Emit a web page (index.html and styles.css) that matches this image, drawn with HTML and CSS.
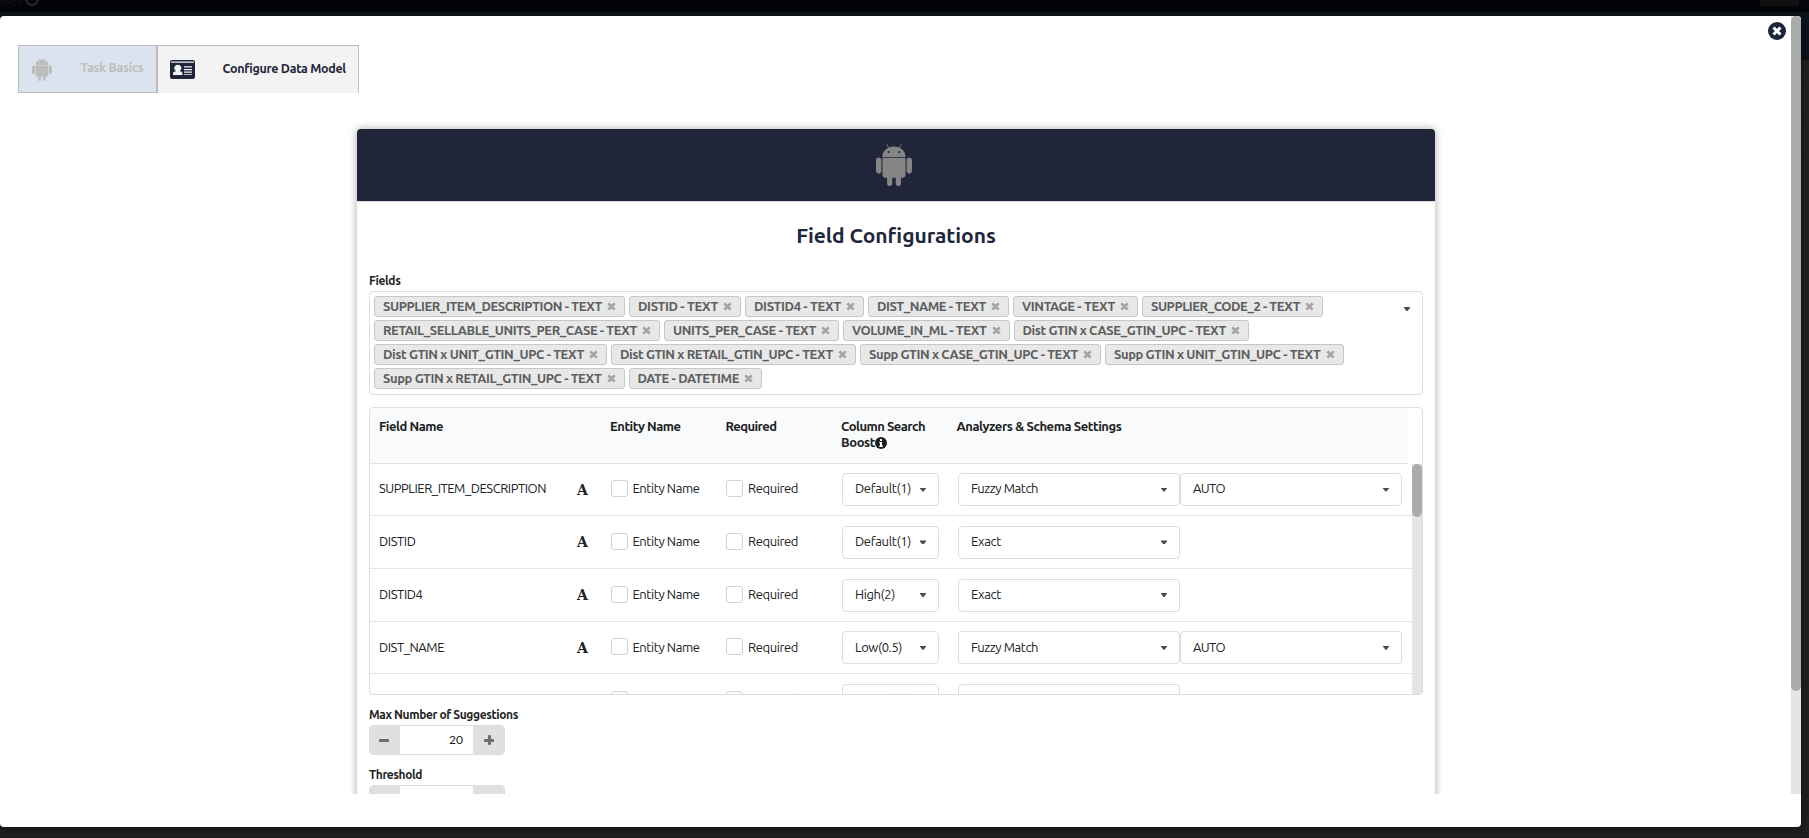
FILE: index.html
```html
<!DOCTYPE html>
<html lang="en">
<head>
<meta charset="utf-8">
<title>Configure Data Model</title>
<link rel="stylesheet" href="styles.css">
</head>
<body>
<svg class="defs" aria-hidden="true">
  <symbol id="android" viewBox="32 32 384 448"><path d="M89.6 204.5v115.8c0 15.4-12.1 27.7-27.5 27.7-15.3 0-30.1-12.4-30.1-27.7V204.5c0-15.1 14.8-27.5 30.1-27.5 15.1 0 27.5 12.4 27.5 27.5zm10.8 157c0 16.4 13.2 29.6 29.6 29.6h19.9l.3 61.1c0 36.9 55.2 36.6 55.2 0v-61.1h37.2v61.1c0 36.7 55.5 36.8 55.5 0v-61.1h20.2c16.2 0 29.4-13.2 29.4-29.6V182.1H100.4v179.4zm248-189.1H99.3c0-42.8 25.6-80 63.6-99.4l-19.1-35.3c-2.8-4.9 4.3-8 6.7-3.8l19.4 35.6c34.9-15.5 75-14.7 108.3 0L297.5 34c2.5-4.3 9.5-1.1 6.7 3.8L285.1 73c37.7 19.4 63.3 56.6 63.3 99.4zm-170.7-55.5c0-5.7-4.6-10.5-10.5-10.5-5.7 0-10.2 4.8-10.2 10.5s4.6 10.5 10.2 10.5c5.9 0 10.5-4.8 10.5-10.5zm113.4 0c0-5.7-4.6-10.5-10.2-10.5-5.9 0-10.5 4.8-10.5 10.5s4.6 10.5 10.5 10.5c5.6 0 10.2-4.8 10.2-10.5zm94.8 60.1c-15.1 0-27.5 12.1-27.5 27.5v115.8c0 15.4 12.4 27.7 27.5 27.7 15.4 0 30.1-12.4 30.1-27.7V204.5c0-15.4-14.8-27.5-30.1-27.5z"/></symbol>
  <symbol id="times" viewBox="0 0 10 10"><path d="M1.500 1.500l7 7M8.500 1.500l-7 7" stroke="currentColor" stroke-width="3" fill="none"/></symbol>
</svg>

<div class="backdrop">
  <div class="brandbar"><span class="brand">GHTS</span><span class="ring"></span><span class="user"></span></div>
  <div class="navbar"></div>
  <div class="page"></div>
</div>

<div class="modal">
  <div class="scroller">
    <div class="view">
      <div class="tabs">
        <div class="tab tab-disabled"><svg class="tab-android"><use href="#android"/></svg><span data-fit="63">Task Basics</span></div>
        <div class="tab tab-active">
          <svg class="tab-card" viewBox="0 0 25 19"><path fill="#1e253a" fill-rule="evenodd" d="M2 0h21a2 2 0 0 1 2 2v15a2 2 0 0 1-2 2H2a2 2 0 0 1-2-2V2a2 2 0 0 1 2-2zM1 1.6v1.2h23V1.6zM14 6.3v1.2h8V6.3zM14 9v1.2h8V9zM14 11.6v1.2h8v-1.2zM14 14.2v.8h8v-.8zM3 15h9.5v-1.2q0-2.3-3-2.6a3.6 3.4 0 1 0-3.4 0q-3.100 .3-3.100 2.600z"/></svg>
          <span data-fit="123">Configure Data Model</span>
        </div>
      </div>

      <div class="card">
        <div class="card-head"><svg class="head-android"><use href="#android"/></svg></div>
        <div class="card-body">
          <h2 class="title"><span data-fit="199">Field Configurations</span></h2>
          <div class="label label-fields"><span data-fit="31.500">Fields</span></div>
          <div class="multi">
            <div class="chips" id="chips"></div>
            <i class="caret"></i>
          </div>
          <div class="table">
            <div class="thead">
              <span><b data-fit="64">Field Name</b></span>
              <span><b data-fit="70.500">Entity Name</b></span>
              <span><b data-fit="51">Required</b></span>
              <span><b data-fit="84">Column Search</b><br><b data-fit="34">Boost</b><svg class="info" viewBox="0 0 12 12"><circle cx="6" cy="6" r="6" fill="#1c1d1e"/><path d="M5 2h2v2H5zM4.200 5H7v3.600h.8V10H4.200V8.600H5V6.200h-.8z" fill="#fff"/></svg></span>
              <span><b data-fit="165">Analyzers &amp; Schema Settings</b></span>
            </div>
            <div class="tscroll">
              <div class="rows" id="rows"></div>
              <div class="track"><div class="thumb"></div></div>
            </div>
          </div>
          <div class="label label-num"><span data-fit="149">Max Number of Suggestions</span></div>
          <div class="stepper"><span class="step"><i class="bar"></i></span><span class="num">20</span><span class="step step-plus"><i class="bar"></i><i class="bar bar-v"></i></span></div>
          <div class="label label-num"><span data-fit="53">Threshold</span></div>
          <div class="stepper"><span class="step"></span><span class="num"></span><span class="step step-plus"></span></div>
        </div>
      </div>
    </div>
    <div class="main-track"><div class="main-thumb"></div></div>
  </div>
  <svg class="close" viewBox="0 0 18 18"><circle cx="9" cy="9" r="9" fill="#1e253a"/><path d="M5.500 5.500l7 7M12.500 5.500l-7 7" stroke="#fff" stroke-width="3"/></svg>
</div>
<script src="app.js"></script>
</body>
</html>
```

FILE: styles.css
```css
* { box-sizing: border-box; }
body {
  margin: 0;
  height: 838px;
  overflow: hidden;
  font-family: Ubuntu, "Noto Sans", sans-serif;
  font-size: 13px;
  color: #212223;
}
.defs { display: none; }
[data-fit] { display: inline-block; white-space: nowrap; }

.backdrop { height: 838px; display: flex; flex-direction: column; background: #212121; }
.brandbar { height: 12px; background: #030508; display: flex; align-items: flex-start; overflow: hidden; }
.brand { width: 25px; font-size: 8px; line-height: 6px; letter-spacing: .8px; color: #1c1c1c; }
.ring { width: 14px; height: 14px; margin-top: -8px; border: 2px solid #2a2b2b; border-radius: 50%; }
.user { width: 39px; height: 6px; margin: 0 10px 0 auto; background: #111; }
.navbar { height: 48px; background: linear-gradient(#0c131a, #0b1018); }
.page {
  flex: 1;
  background:
    linear-gradient(#1b1b1b, #1b1b1b) 0 9px / 100% 1px no-repeat,
    linear-gradient(#1b1b1b, #1b1b1b) 0 22px / 100% 1px no-repeat,
    linear-gradient(#1b1b1b, #1b1b1b) 0 53px / 100% 1px no-repeat,
    linear-gradient(#1b1b1b, #1b1b1b) 0 66px / 100% 1px no-repeat,
    linear-gradient(#1b1b1b, #1b1b1b) 0 97px / 100% 1px no-repeat,
    linear-gradient(#1a1a1a, #1a1a1a) 0 777px / 100% 1px no-repeat,
    #212121;
}

.modal {
  position: absolute;
  left: 0;
  top: 16px;
  width: 1801px;
  height: 811px;
  background: #fff;
  border-radius: 4px;
  overflow: hidden;
  box-shadow: 1px 3px 3px rgba(0, 0, 0, .2), 1px 3px 15px 2px rgba(0, 0, 0, .2);
}
.scroller { height: 778px; display: flex; overflow: hidden; }
.view { flex: 1; padding: 29px 0 0 18px; }
.main-track { width: 10px; background: #e5e5e5; }
.main-thumb { height: 675px; background: #ababab; border-radius: 5px; }
.close { position: absolute; left: 1768px; top: 6px; width: 18px; height: 18px; }

.tabs { display: flex; height: 48px; font-weight: 700; font-size: 12.500px; }
.tab { display: flex; align-items: center; border: 1px solid #bcbcbc; }
.tab-disabled { width: 139px; background: #dbe4ee; color: #bdbdbd; padding-left: 13px; }
.tab-disabled span { margin-left: 28.500px; padding-bottom: 4px; }
.tab-android { width: 20px; height: 23px; fill: #bdbdbd; }
.tab-active { width: 202px; background: #f3f3f3; color: #1e253a; border-bottom: 0; padding-left: 12px; }
.tab-active span { margin-left: 27.500px; padding-bottom: 3px; }
.tab-card { width: 25px; height: 19px; }

.card {
  width: 1078px;
  height: 1000px;
  margin: 36px 0 0 339px;
  border-radius: 4px;
  box-shadow: 0 0 8px rgba(0, 0, 0, .35);
}
.card-head {
  height: 73px;
  background: #202539;
  border-bottom: 1px solid #dfe0e4;
  border-radius: 4px 4px 0 0;
  display: flex;
  justify-content: center;
  padding: 15px 4px 0 0;
}
.head-android { width: 36px; height: 42px; fill: #858585; }
.card-body { padding: 0 12px; }
.title { margin: 0; padding-top: 18px; height: 70px; font-size: 21px; line-height: 30px; text-align: center; color: #20273c; }
.label { font-size: 12px; font-weight: 700; line-height: 17px; }
.label-fields { height: 19px; }
.multi { width: 1054px; height: 104px; border: 1px solid #dcdddd; border-radius: 4px; display: flex; padding: 4px; }
.chips { width: 1010px; display: flex; flex-direction: column; gap: 3px; }
.chip-row { display: flex; gap: 4px; }
.chip {
  height: 21px;
  display: flex;
  align-items: center;
  border: 1px solid #c6c7c8;
  border-radius: 3px;
  background: #e8e8e8;
  color: #5d5e5e;
  font-weight: 700;
  font-size: 13px;
  line-height: 17px;
  padding: 0 0 1px 8px;
}
.chip svg { width: 9px; height: 9px; margin: 1px 0 0 5px; color: #a3a3a3; }
.caret { width: 6px; height: 4px; background: #4a4b4b; clip-path: polygon(0 0, 100% 0, 100% 20%, 60% 100%, 40% 100%, 0 20%); }
.multi .caret { margin: 11px 0 0 20px; }

.table { width: 1054px; height: 288px; margin-top: 12px; border: 1px solid #dcdddd; border-radius: 4px; overflow: hidden; }
.thead, .row { display: grid; grid-template-columns: 231px 115.500px 115.500px 115.500px 1fr; padding-left: 9px; }
.thead { width: 1038px; height: 56px; background: #f9fafb; border-bottom: 1px solid #e2e3e3; padding-top: 10px; line-height: 16px; }
.info { width: 12px; height: 12px; vertical-align: -2px; }
.tscroll { display: flex; height: 230px; }
.rows { flex: 1; height: 230px; overflow: hidden; }
.track { width: 10px; background: #e5e5e5; }
.thumb { height: 53px; background: #ababab; border-radius: 5px; }
.row { height: 52.670px; padding-top: 9.500px; border-bottom: 1px solid #e5e5e6; }
.row:first-child { height: 52.400px; padding-top: 9px; }
.cell { display: flex; align-items: center; height: 33px; }
.cell [data-fit] { padding-bottom: 2px; }
.row:first-child .cell [data-fit] { padding-bottom: 3px; }
.cell-name { justify-content: space-between; padding-right: 22px; }
.type { font: bold 14px/1 "DejaVu Serif", serif; width: 11px; margin-left: -1px; }
.box { width: 17px; height: 17px; margin: 0 5px 2px .500px; border: 1px solid #d0d1d2; border-radius: 3px; }
.select { height: 33px; display: flex; align-items: center; justify-content: space-between; border: 1px solid #dcdddd; border-radius: 4px; padding: 0 12px; background: #fff; }
.select-boost { width: 97px; margin-left: 1px; }
.select-wide { width: 222px; }
.cell-last { padding-left: 1.500px; }

.label-num { padding-top: 11px; height: 30px; }
.stepper { width: 136px; height: 30px; display: flex; border: 1px solid #dcdddf; border-radius: 4px; overflow: hidden; }
.step { width: 30px; padding-right: 2px; background: #dfe0e2; display: grid; place-items: center; }
.step-plus { width: 31px; padding: 0 0 0 1px; }
.bar { grid-area: 1 / 1; width: 10px; height: 3px; background: #6d6e6f; border-radius: 1px; }
.bar-v { width: 3px; height: 10px; }
.num { flex: 1; text-align: right; padding-right: 10px; font: 12px/28px Lato, sans-serif; }
```

FILE: app.js
```js
const chipRows = [
  [["SUPPLIER_ITEM_DESCRIPTION - TEXT", 251], ["DISTID - TEXT", 112], ["DISTID4 - TEXT", 119], ["DIST_NAME - TEXT", 141], ["VINTAGE - TEXT", 125], ["SUPPLIER_CODE_2 - TEXT", 181]],
  [["RETAIL_SELLABLE_UNITS_PER_CASE - TEXT", 286], ["UNITS_PER_CASE - TEXT", 175], ["VOLUME_IN_ML - TEXT", 166.5], ["Dist GTIN x CASE_GTIN_UPC - TEXT", 235.5]],
  [["Dist GTIN x UNIT_GTIN_UPC - TEXT", 233], ["Dist GTIN x RETAIL_GTIN_UPC - TEXT", 245], ["Supp GTIN x CASE_GTIN_UPC - TEXT", 241], ["Supp GTIN x UNIT_GTIN_UPC - TEXT", 238.5]],
  [["Supp GTIN x RETAIL_GTIN_UPC - TEXT", 250.5], ["DATE - DATETIME", 133.5]]
];

document.getElementById("chips").innerHTML = chipRows.map(row =>
  `<div class="chip-row">${row.map(([text, w]) =>
    `<span class="chip" style="width:${w}px"><span data-fit="${w - 32}">${text}</span><svg><use href="#times"/></svg></span>`).join("")}</div>`
).join("");

const widths = { "Default(1)": 56, "High(2)": 40, "Low(0.5)": 47, "Fuzzy Match": 67, "Exact": 30, "AUTO": 32 };
const rows = [
  ["SUPPLIER_ITEM_DESCRIPTION", 167, "Default(1)", "Fuzzy Match", "AUTO"],
  ["DISTID", 36.5, "Default(1)", "Exact"],
  ["DISTID4", 43.5, "High(2)", "Exact"],
  ["DIST_NAME", 65, "Low(0.5)", "Fuzzy Match", "AUTO"],
  ["VINTAGE", 52, "Default(1)", "Exact"]
];
const select = (text, cls) =>
  `<div class="select ${cls}"><span data-fit="${widths[text]}">${text}</span><i class="caret"></i></div>`;

document.getElementById("rows").innerHTML = rows.map(([name, w, boost, ...analyzers]) => `
  <div class="row">
    <div class="cell cell-name"><span data-fit="${w}">${name}</span><span class="type">A</span></div>
    <div class="cell"><i class="box"></i><span data-fit="67">Entity Name</span></div>
    <div class="cell"><i class="box"></i><span data-fit="50">Required</span></div>
    <div class="cell">${select(boost, "select-boost")}</div>
    <div class="cell cell-last">${analyzers.map(a => select(a, "select-wide")).join("")}</div>
  </div>`).join("");

document.querySelectorAll("[data-fit]").forEach(el => {
  const target = Number(el.dataset.fit);
  const natural = el.getBoundingClientRect().width;
  el.style.letterSpacing = (target - natural) / el.textContent.length + "px";
});
```
